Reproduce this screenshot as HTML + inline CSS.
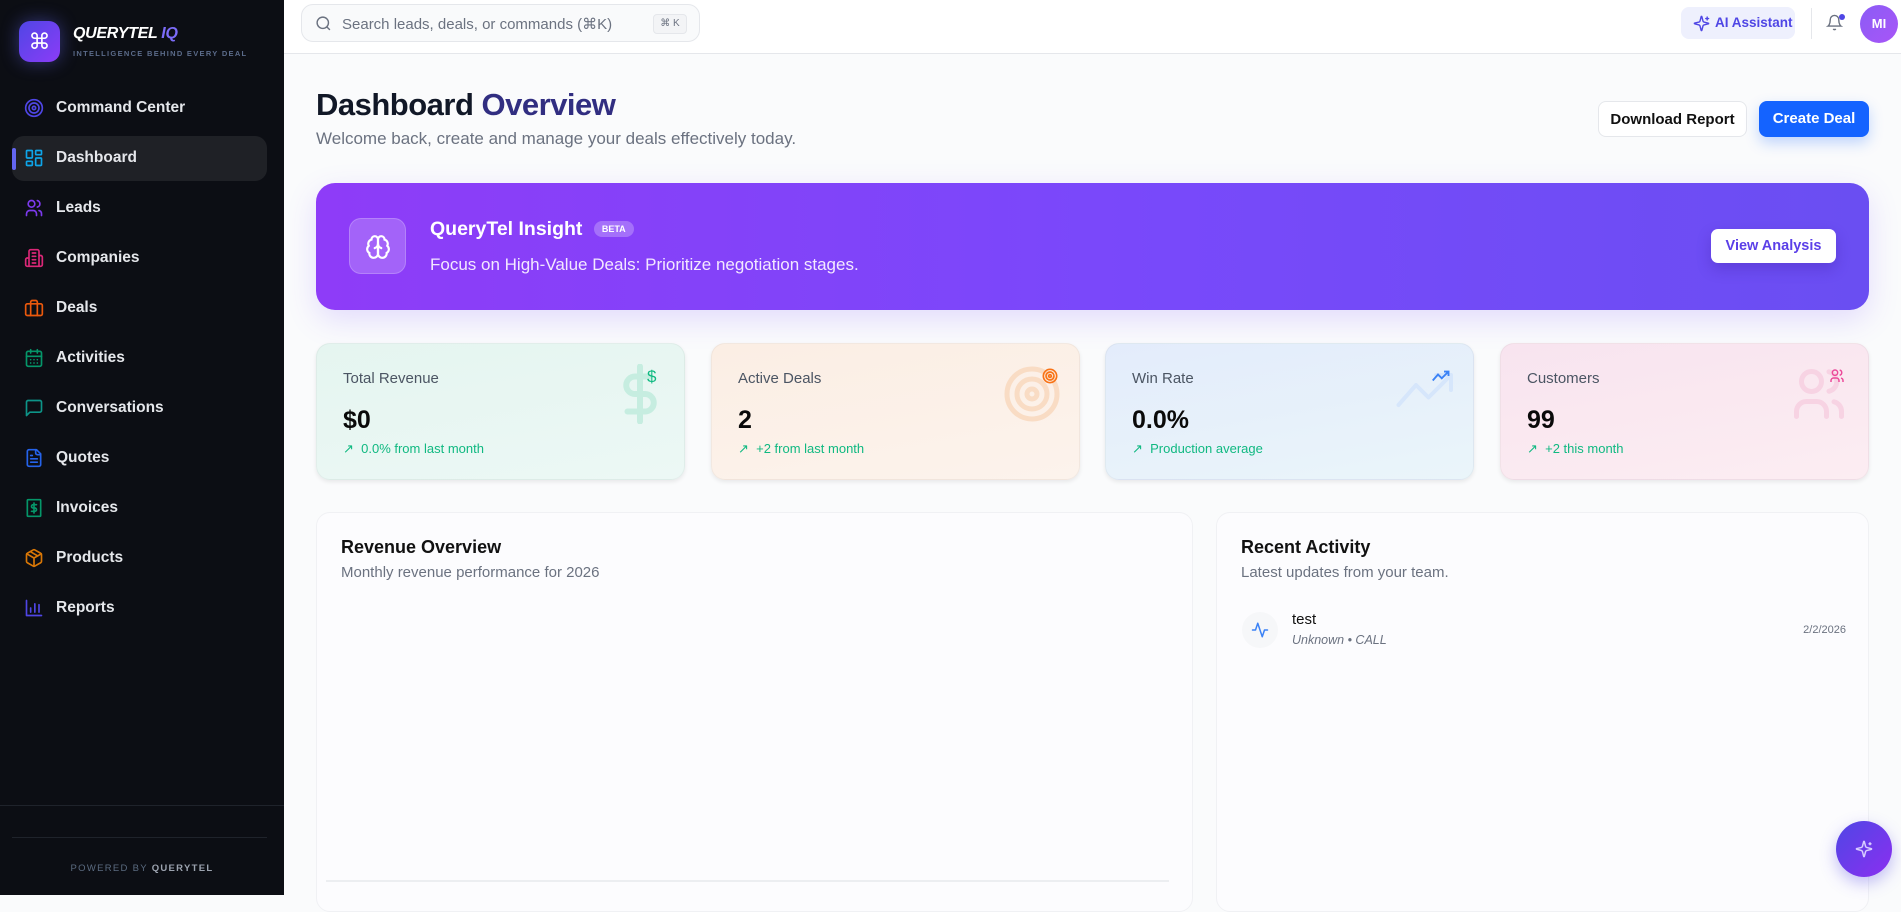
<!DOCTYPE html>
<html><head><meta charset="utf-8"><style>
*{box-sizing:border-box;margin:0;padding:0}
body{width:1901px;height:895px;overflow:hidden;font-family:"Liberation Sans",sans-serif;background:#fafbfc;position:relative}
.sb{position:absolute;left:0;top:0;width:284px;height:895px;background:#0c0e14}
.logo{position:absolute;left:19px;top:21px;width:41px;height:41px;border-radius:11px;background:linear-gradient(135deg,#4f46e5,#8b3cf7);color:#fff;font-size:22px;text-align:center;line-height:41px;box-shadow:0 0 18px rgba(99,102,241,.45)}
.brand{position:absolute;left:73px;top:25px;color:#fff;font-weight:bold;font-style:italic;font-size:16px;letter-spacing:-.3px}
.brand span{color:#7c6cf8}
.tag{position:absolute;left:73px;top:49px;color:#5b6b8a;font-size:7.5px;font-weight:bold;letter-spacing:1.3px}
.nav{position:absolute;left:0;width:284px;height:44px;display:flex;align-items:center;color:#e5e7eb;font-size:15.5px;font-weight:bold}
.nav svg{position:absolute;left:24px;width:20px;height:20px;fill:none;stroke-width:2;stroke-linecap:round;stroke-linejoin:round}
.nav span{position:absolute;left:56px}
.act{position:absolute;left:12px;top:136px;width:255px;height:45px;border-radius:12px;background:#1f2126}
.actbar{position:absolute;left:12px;top:148px;width:4px;height:22px;border-radius:2px;background:#6366f1}
.top{position:absolute;left:284px;top:0;width:1617px;height:54px;background:#fff;border-bottom:1px solid #e5e7eb}
.search{position:absolute;left:301px;top:4px;width:399px;height:38px;border:1px solid #e5e7eb;border-radius:12px;background:#f9fafb}
.search .ph{position:absolute;left:40px;top:10px;font-size:15px;color:#6b7280}
.kbd{position:absolute;right:12px;top:9px;width:34px;height:20px;border:1px solid #e5e7eb;border-radius:4px;background:#f3f4f6;font-size:10px;color:#6b7280;text-align:center;line-height:18px}
.ai{position:absolute;left:1681px;top:7px;width:114px;height:32px;border-radius:8px;background:#eef0fd;color:#4f46e5;font-size:13.5px;font-weight:bold;line-height:32px;padding-left:34px;white-space:nowrap}
.av{position:absolute;left:1860px;top:5px;width:38px;height:38px;border-radius:50%;background:linear-gradient(135deg,#8b5cf6,#a855f7);color:#fff;font-weight:bold;font-size:13px;text-align:center;line-height:38px}
h1{position:absolute;left:316px;top:87px;font-size:31px;color:#111827;letter-spacing:-.5px}
h1 span{color:#312e81}
.sub{position:absolute;left:316px;top:129px;font-size:17px;color:#6b7280}
.btn{position:absolute;top:101px;height:36px;border-radius:8px;font-size:15px;font-weight:bold;text-align:center;line-height:36px}
.ban{position:absolute;left:316px;top:183px;width:1553px;height:127px;border-radius:19px;background:linear-gradient(90deg,#8e3cf8,#7849fa 55%,#6a4ef2);box-shadow:0 10px 30px rgba(124,77,255,.18)}
.card{position:absolute;top:343px;width:369px;height:137px;border-radius:14px;box-shadow:0 2px 4px rgba(0,0,0,.08);border:1px solid rgba(0,0,0,.04)}
.card .l{position:absolute;left:26px;top:26px;font-size:15px;color:#4b5563}
.card .v{position:absolute;left:26px;top:62px;font-size:25px;font-weight:bold;color:#0a0a0a}
.card .s{position:absolute;left:26px;top:97px;font-size:13px;color:#10b981}
.panel{position:absolute;top:512px;height:400px;background:#fcfcfe;border:1px solid #f0f1f4;border-radius:14px}
.pt{position:absolute;left:24px;top:24px;font-size:18px;font-weight:bold;color:#111}
.ps{position:absolute;left:24px;top:51px;font-size:15px;color:#6b7280}
</style></head><body>
<div class="sb">
 <div class="logo">⌘</div>
 <div class="brand">QUERYTEL <span>IQ</span></div>
 <div class="tag">INTELLIGENCE BEHIND EVERY DEAL</div>
 <div class="act"></div><div class="actbar"></div>
 <div class="nav" style="top:86px"><svg viewBox="0 0 24 24" stroke="#4f46e5"><circle cx="12" cy="12" r="10"/><circle cx="12" cy="12" r="6"/><circle cx="12" cy="12" r="2"/></svg><span>Command Center</span></div>
 <div class="nav" style="top:136px"><svg viewBox="0 0 24 24" stroke="#0ea5e9"><rect x="3" y="3" width="7" height="9" rx="1"/><rect x="14" y="3" width="7" height="5" rx="1"/><rect x="14" y="12" width="7" height="9" rx="1"/><rect x="3" y="16" width="7" height="5" rx="1"/></svg><span>Dashboard</span></div>
 <div class="nav" style="top:186px"><svg viewBox="0 0 24 24" stroke="#7c3aed"><circle cx="9" cy="7" r="4"/><path d="M3 21v-2a4 4 0 0 1 4-4h4a4 4 0 0 1 4 4v2M16 3.1a4 4 0 0 1 0 7.8M21 21v-2a4 4 0 0 0-3-3.9"/></svg><span>Leads</span></div>
 <div class="nav" style="top:236px"><svg viewBox="0 0 24 24" stroke="#db2777"><path d="M6 22V4a2 2 0 0 1 2-2h8a2 2 0 0 1 2 2v18ZM6 12H4a2 2 0 0 0-2 2v6a2 2 0 0 0 2 2h2M18 9h2a2 2 0 0 1 2 2v9a2 2 0 0 1-2 2h-2M10 6h4M10 10h4M10 14h4M10 18h4"/></svg><span>Companies</span></div>
 <div class="nav" style="top:286px"><svg viewBox="0 0 24 24" stroke="#ea580c"><rect x="2" y="7" width="20" height="14" rx="2"/><path d="M16 21V5a2 2 0 0 0-2-2h-4a2 2 0 0 0-2 2v16"/></svg><span>Deals</span></div>
 <div class="nav" style="top:336px"><svg viewBox="0 0 24 24" stroke="#059669"><rect x="3" y="4" width="18" height="18" rx="2"/><path d="M16 2v4M8 2v4M3 10h18M8 14h.01M12 14h.01M16 14h.01M8 18h.01M12 18h.01M16 18h.01"/></svg><span>Activities</span></div>
 <div class="nav" style="top:386px"><svg viewBox="0 0 24 24" stroke="#0d9488"><path d="M21 15a2 2 0 0 1-2 2H7l-4 4V5a2 2 0 0 1 2-2h14a2 2 0 0 1 2 2z"/></svg><span>Conversations</span></div>
 <div class="nav" style="top:436px"><svg viewBox="0 0 24 24" stroke="#2563eb"><path d="M15 2H6a2 2 0 0 0-2 2v16a2 2 0 0 0 2 2h12a2 2 0 0 0 2-2V7Z"/><path d="M14 2v4a2 2 0 0 0 2 2h4M10 9H8M16 13H8M16 17H8"/></svg><span>Quotes</span></div>
 <div class="nav" style="top:486px"><svg viewBox="0 0 24 24" stroke="#059669"><rect x="4" y="2" width="16" height="20" rx="1"/><path d="M15 8h-4a2 2 0 0 0 0 4h2a2 2 0 0 1 0 4H9M12 6v12"/></svg><span>Invoices</span></div>
 <div class="nav" style="top:536px"><svg viewBox="0 0 24 24" stroke="#d97706"><path d="M21 8a2 2 0 0 0-1-1.7l-7-4a2 2 0 0 0-2 0l-7 4A2 2 0 0 0 3 8v8a2 2 0 0 0 1 1.7l7 4a2 2 0 0 0 2 0l7-4A2 2 0 0 0 21 16Z"/><path d="M3.3 7 12 12l8.7-5M12 22V12M7.5 4.3l9 5.2"/></svg><span>Products</span></div>
 <div class="nav" style="top:586px"><svg viewBox="0 0 24 24" stroke="#4f46e5"><path d="M3 3v18h18M8 17v-5M13 17V7M18 17v-9"/></svg><span>Reports</span></div>
 <div style="position:absolute;left:0;top:805px;width:284px;height:1px;background:#1f232b"></div>
 <div style="position:absolute;left:12px;top:837px;width:255px;height:1px;background:#1f232b"></div>
 <div style="position:absolute;left:0;top:863px;width:284px;text-align:center;font-size:9.5px;letter-spacing:1.3px;color:#5b6b80">POWERED BY <b style="color:#9ca3af">QUERYTEL</b></div>
</div>

<div class="top"></div>
<div class="search"><svg style="position:absolute;left:13px;top:10px" width="17" height="17" viewBox="0 0 24 24" fill="none" stroke="#6b7280" stroke-width="2"><circle cx="11" cy="11" r="8"/><path d="m21 21-4.3-4.3"/></svg><div class="ph">Search leads, deals, or commands (⌘K)</div><div class="kbd">⌘ K</div></div>
<div class="ai"><svg style="position:absolute;left:12px;top:8px" width="17" height="17" viewBox="0 0 24 24" fill="none" stroke="#4f46e5" stroke-width="2" stroke-linecap="round"><path d="M9.9 15.5A2 2 0 0 0 8.5 14l-6.1-1.6a.5.5 0 0 1 0-1L8.5 9.9A2 2 0 0 0 9.9 8.5l1.6-6.1a.5.5 0 0 1 1 0l1.6 6.1a2 2 0 0 0 1.4 1.4l6.1 1.6a.5.5 0 0 1 0 1l-6.1 1.6a2 2 0 0 0-1.4 1.4l-1.6 6.1a.5.5 0 0 1-1 0z"/><path d="M20 3v4M22 5h-4"/></svg>AI Assistant</div>
<div style="position:absolute;left:1811px;top:8px;width:1px;height:31px;background:#e5e7eb"></div>
<svg style="position:absolute;left:1826px;top:14px" width="17" height="17" viewBox="0 0 24 24" fill="none" stroke="#6b7280" stroke-width="2"><path d="M6 8a6 6 0 0 1 12 0c0 7 3 9 3 9H3s3-2 3-9M10.3 21a1.9 1.9 0 0 0 3.4 0"/></svg>
<div style="position:absolute;left:1839px;top:14px;width:6px;height:6px;border-radius:50%;background:#4f46e5"></div>
<div class="av">MI</div>

<h1>Dashboard <span>Overview</span></h1>
<div class="sub">Welcome back, create and manage your deals effectively today.</div>
<div class="btn" style="left:1598px;width:149px;background:#fff;border:1px solid #e5e7eb;color:#111">Download Report</div>
<div class="btn" style="left:1759px;width:110px;background:#1463ff;color:#fff;box-shadow:0 6px 14px rgba(20,99,255,.25)">Create Deal</div>

<div class="ban">
 <div style="position:absolute;left:33px;top:35px;width:57px;height:56px;border-radius:12px;background:rgba(255,255,255,.2);border:1px solid rgba(255,255,255,.2)"><svg style="position:absolute;left:15px;top:15px" width="26" height="26" viewBox="0 0 24 24" fill="none" stroke="#fff" stroke-width="2" stroke-linecap="round"><path d="M12 5a3 3 0 1 0-5.997.125 4 4 0 0 0-2.526 5.77 4 4 0 0 0 .556 6.588A4 4 0 1 0 12 18Z"/><path d="M12 5a3 3 0 1 1 5.997.125 4 4 0 0 1 2.526 5.77 4 4 0 0 1-.556 6.588A4 4 0 1 1 12 18Z"/><path d="M15 13a4.5 4.5 0 0 1-3-4 4.5 4.5 0 0 1-3 4M12 18V9"/></svg></div>
 <div style="position:absolute;left:114px;top:35px;color:#fff;font-weight:bold;font-size:19.5px">QueryTel Insight <span style="display:inline-block;vertical-align:3px;margin-left:6px;font-size:9px;background:rgba(255,255,255,.25);border-radius:8px;padding:3px 8px">BETA</span></div>
 <div style="position:absolute;left:114px;top:72px;color:#f3e8ff;font-size:17px">Focus on High-Value Deals: Prioritize negotiation stages.</div>
 <div style="position:absolute;left:1395px;top:46px;width:125px;height:34px;border-radius:7px;background:#fff;color:#5b3fe8;font-weight:bold;font-size:14.5px;text-align:center;line-height:34px;box-shadow:0 6px 14px rgba(60,30,160,.3)">View Analysis</div>
</div>

<div class="card" style="left:316px;background:linear-gradient(170deg,#e5f5f0,#ecf8f5)">
 <svg style="position:absolute;left:305px;top:20px" width="36" height="60" viewBox="0 0 12 24" fill="none" stroke="#c6ede0" stroke-width="2.4" stroke-linecap="round"><path d="M6 1v22M10 5H4a3.5 3.5 0 0 0 0 7h4a3.5 3.5 0 0 1 0 7H1"/></svg>
 <div style="position:absolute;left:330px;top:23px;color:#10b981;font-size:17px">$</div>
 <div class="l">Total Revenue</div><div class="v">$0</div><div class="s">↗&nbsp; 0.0% from last month</div></div>
<div class="card" style="left:711px;background:linear-gradient(170deg,#fbeee4,#fcf3ec)">
 <svg style="position:absolute;left:290px;top:20px" width="60" height="60" viewBox="0 0 24 24" fill="none" stroke="#f9dcc4" stroke-width="2"><circle cx="12" cy="12" r="10"/><circle cx="12" cy="12" r="6"/><circle cx="12" cy="12" r="2"/></svg>
 <svg style="position:absolute;left:330px;top:24px" width="16" height="16" viewBox="0 0 24 24" fill="none" stroke="#f97316" stroke-width="2.5"><circle cx="12" cy="12" r="10"/><circle cx="12" cy="12" r="6"/><circle cx="12" cy="12" r="2"/></svg>
 <div class="l">Active Deals</div><div class="v">2</div><div class="s">↗&nbsp; +2 from last month</div></div>
<div class="card" style="left:1105px;background:linear-gradient(170deg,#e3ecfb,#eaf5fa)">
 <svg style="position:absolute;left:290px;top:28px" width="60" height="36" viewBox="0 0 24 14" fill="none" stroke="#d6e6fb" stroke-width="1.6" stroke-linecap="round" stroke-linejoin="round"><path d="M1 13l7-8 5 5 9-9M16 1h6v6"/></svg>
 <svg style="position:absolute;left:326px;top:26px" width="18" height="12" viewBox="0 0 24 14" fill="none" stroke="#3b82f6" stroke-width="2.5"><path d="M1 13l7-8 5 5 9-9M16 1h6v6"/></svg>
 <div class="l">Win Rate</div><div class="v">0.0%</div><div class="s">↗&nbsp; Production average</div></div>
<div class="card" style="left:1500px;background:linear-gradient(170deg,#f8e4ef,#fcedf2)">
 <svg style="position:absolute;left:288px;top:20px" width="60" height="60" viewBox="0 0 24 24" fill="none" stroke="#f7d3e3" stroke-width="2" stroke-linecap="round"><circle cx="9" cy="7" r="4"/><path d="M3 21v-2a4 4 0 0 1 4-4h4a4 4 0 0 1 4 4v2M16 3.1a4 4 0 0 1 0 7.8M21 21v-2a4 4 0 0 0-3-3.9"/></svg>
 <svg style="position:absolute;left:328px;top:24px" width="16" height="16" viewBox="0 0 24 24" fill="none" stroke="#ec4899" stroke-width="2.2"><circle cx="9" cy="7" r="4"/><path d="M3 21v-2a4 4 0 0 1 4-4h4a4 4 0 0 1 4 4v2M16 3.1a4 4 0 0 1 0 7.8M21 21v-2a4 4 0 0 0-3-3.9"/></svg>
 <div class="l">Customers</div><div class="v">99</div><div class="s">↗&nbsp; +2 this month</div></div>

<div class="panel" style="left:316px;width:877px">
 <div class="pt">Revenue Overview</div><div class="ps">Monthly revenue performance for 2026</div>
 <div style="position:absolute;left:9px;top:367px;width:843px;height:2px;background:#eceef1"></div>
</div>
<div class="panel" style="left:1216px;width:653px">
 <div class="pt">Recent Activity</div><div class="ps">Latest updates from your team.</div>
 <div style="position:absolute;left:25px;top:99px;width:36px;height:36px;border-radius:50%;background:#f6f7f9"></div>
 <svg style="position:absolute;left:34px;top:108px" width="18" height="18" viewBox="0 0 24 24" fill="none" stroke="#3b82f6" stroke-width="2" stroke-linecap="round" stroke-linejoin="round"><path d="M22 12h-4l-3 9L9 3l-3 9H2"/></svg>
 <div style="position:absolute;left:75px;top:98px;font-size:15px;color:#111">test</div>
 <div style="position:absolute;left:75px;top:120px;font-size:12.5px;color:#6b7280;font-style:italic">Unknown • CALL</div>
 <div style="position:absolute;right:22px;top:111px;font-size:11px;color:#6b7280">2/2/2026</div>
</div>
<div style="position:absolute;left:1836px;top:821px;width:56px;height:56px;border-radius:50%;background:linear-gradient(135deg,#4f46e5,#8b2ff0);box-shadow:0 6px 16px rgba(79,70,229,.35)"><svg style="position:absolute;left:19px;top:19px" width="18" height="18" viewBox="0 0 24 24" fill="none" stroke="#d8ccff" stroke-width="2"><path d="M9.9 15.5A2 2 0 0 0 8.5 14l-6.1-1.6a.5.5 0 0 1 0-1L8.5 9.9A2 2 0 0 0 9.9 8.5l1.6-6.1a.5.5 0 0 1 1 0l1.6 6.1a2 2 0 0 0 1.4 1.4l6.1 1.6a.5.5 0 0 1 0 1l-6.1 1.6a2 2 0 0 0-1.4 1.4l-1.6 6.1a.5.5 0 0 1-1 0z"/><path d="M20 3v4M22 5h-4"/></svg></div>
</body></html>
